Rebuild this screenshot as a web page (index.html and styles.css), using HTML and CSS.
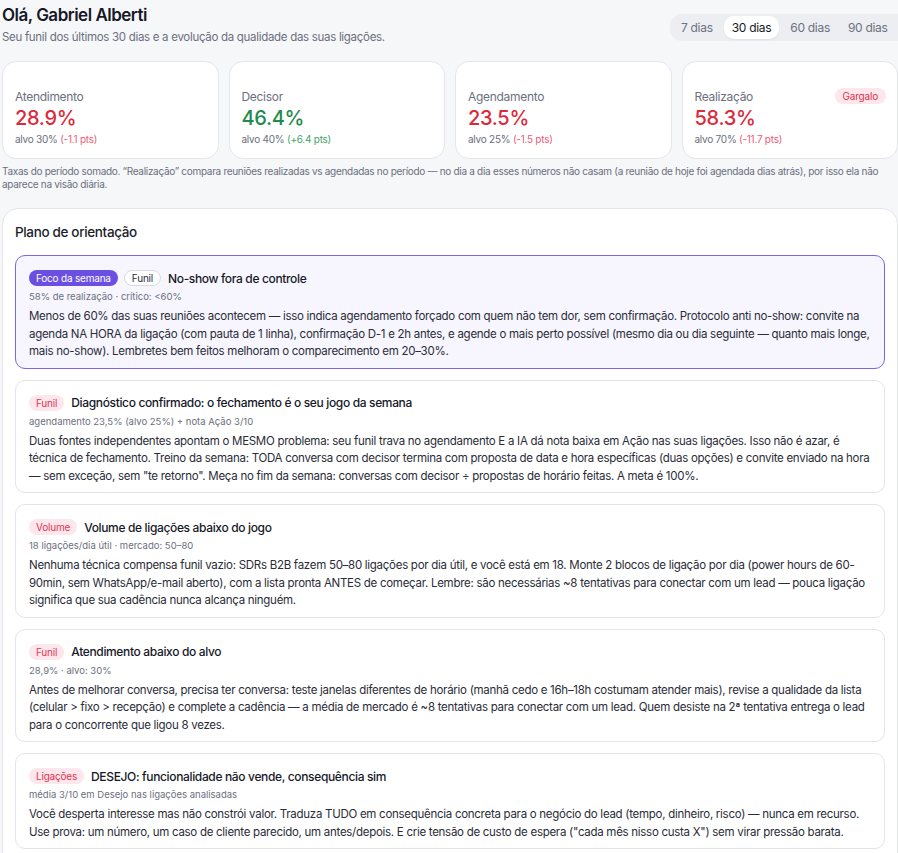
FILE: index.html
```html
<!DOCTYPE html>
<html lang="pt-BR">
<head>
<meta charset="utf-8">
<title>Funil</title>
<link rel="stylesheet" href="styles.css">
</head>
<body>
<div class="page">
  <header class="top">
    <div class="greet">
      <h1 class="hello">Olá, Gabriel Alberti</h1>
      <p class="sub">Seu funil dos últimos 30 dias e a evolução da qualidade das suas ligações.</p>
    </div>
    <nav class="tabs">
      <span class="tab">7 dias</span>
      <span class="tab active">30 dias</span>
      <span class="tab">60 dias</span>
      <span class="tab">90 dias</span>
    </nav>
  </header>

  <section class="kpis">
    <div class="kpi">
      <div class="kpi-head"><span class="kpi-label">Atendimento</span></div>
      <div class="kpi-value bad">28.9%</div>
      <div class="kpi-foot">alvo 30% <span class="bad-soft">(-1.1 pts)</span></div>
    </div>
    <div class="kpi">
      <div class="kpi-head"><span class="kpi-label">Decisor</span></div>
      <div class="kpi-value good">46.4%</div>
      <div class="kpi-foot">alvo 40% <span class="good-soft">(+6.4 pts)</span></div>
    </div>
    <div class="kpi">
      <div class="kpi-head"><span class="kpi-label">Agendamento</span></div>
      <div class="kpi-value bad">23.5%</div>
      <div class="kpi-foot">alvo 25% <span class="bad-soft">(-1.5 pts)</span></div>
    </div>
    <div class="kpi">
      <div class="kpi-head"><span class="kpi-label">Realização</span><span class="flag">Gargalo</span></div>
      <div class="kpi-value bad">58.3%</div>
      <div class="kpi-foot">alvo 70% <span class="bad-soft">(-11.7 pts)</span></div>
    </div>
  </section>

  <p class="note">Taxas do período somado. “Realização” compara reuniões realizadas vs agendadas no período — no dia a dia esses números não casam (a reunião de hoje foi agendada dias atrás), por isso ela não aparece na visão diária.</p>

  <section class="plan">
    <h2 class="plan-title">Plano de orientação</h2>

    <article class="tip focus">
      <div class="tip-head">
        <span class="pill pill-focus">Foco da semana</span>
        <span class="pill pill-outline">Funil</span>
        <span class="tip-title">No-show fora de controle</span>
      </div>
      <div class="tip-meta">58% de realização · crítico: &lt;60%</div>
      <p class="tip-body">Menos de 60% das suas reuniões acontecem — isso indica agendamento forçado com quem não tem dor, sem confirmação. Protocolo anti no-show: convite na agenda NA HORA da ligação (com pauta de 1 linha), confirmação D-1 e 2h antes, e agende o mais perto possível (mesmo dia ou dia seguinte — quanto mais longe, mais no-show). Lembretes bem feitos melhoram o comparecimento em 20–30%.</p>
    </article>

    <article class="tip">
      <div class="tip-head">
        <span class="pill pill-soft">Funil</span>
        <span class="tip-title">Diagnóstico confirmado: o fechamento é o seu jogo da semana</span>
      </div>
      <div class="tip-meta">agendamento 23,5% (alvo 25%) + nota Ação 3/10</div>
      <p class="tip-body">Duas fontes independentes apontam o MESMO problema: seu funil trava no agendamento E a IA dá nota baixa em Ação nas suas ligações. Isso não é azar, é técnica de fechamento. Treino da semana: TODA conversa com decisor termina com proposta de data e hora específicas (duas opções) e convite enviado na hora — sem exceção, sem "te retorno". Meça no fim da semana: conversas com decisor ÷ propostas de horário feitas. A meta é 100%.</p>
    </article>

    <article class="tip">
      <div class="tip-head">
        <span class="pill pill-soft">Volume</span>
        <span class="tip-title">Volume de ligações abaixo do jogo</span>
      </div>
      <div class="tip-meta">18 ligações/dia útil · mercado: 50–80</div>
      <p class="tip-body">Nenhuma técnica compensa funil vazio: SDRs B2B fazem 50–80 ligações por dia útil, e você está em 18. Monte 2 blocos de ligação por dia (power hours de 60-90min, sem WhatsApp/e-mail aberto), com a lista pronta ANTES de começar. Lembre: são necessárias ~8 tentativas para conectar com um lead — pouca ligação significa que sua cadência nunca alcança ninguém.</p>
    </article>

    <article class="tip">
      <div class="tip-head">
        <span class="pill pill-soft">Funil</span>
        <span class="tip-title">Atendimento abaixo do alvo</span>
      </div>
      <div class="tip-meta">28,9% · alvo: 30%</div>
      <p class="tip-body">Antes de melhorar conversa, precisa ter conversa: teste janelas diferentes de horário (manhã cedo e 16h–18h costumam atender mais), revise a qualidade da lista (celular &gt; fixo &gt; recepção) e complete a cadência — a média de mercado é ~8 tentativas para conectar com um lead. Quem desiste na 2ª tentativa entrega o lead para o concorrente que ligou 8 vezes.</p>
    </article>

    <article class="tip">
      <div class="tip-head">
        <span class="pill pill-soft">Ligações</span>
        <span class="tip-title">DESEJO: funcionalidade não vende, consequência sim</span>
      </div>
      <div class="tip-meta">média 3/10 em Desejo nas ligações analisadas</div>
      <p class="tip-body">Você desperta interesse mas não constrói valor. Traduza TUDO em consequência concreta para o negócio do lead (tempo, dinheiro, risco) — nunca em recurso. Use prova: um número, um caso de cliente parecido, um antes/depois. E crie tensão de custo de espera ("cada mês nisso custa X") sem virar pressão barata.</p>
    </article>
  </section>
</div>
</body>
</html>
```

FILE: styles.css
```css
* { box-sizing: border-box; }

html, body {
  margin: 0;
  padding: 0;
  background: #f6f7f9;
}

body {
  font-family: Inter, "Noto Sans", sans-serif;
  color: #1b1d2a;
  letter-spacing: -0.2px;
  overflow: hidden;
}

.page {
  width: 898px;
  padding: 4px 0 0 2px;
}

/* header */
.top {
  display: flex;
  justify-content: space-between;
  align-items: flex-start;
}

.hello {
  margin: 0;
  font-size: 17px;
  font-weight: 600;
  letter-spacing: -0.5px;
  line-height: 22px;
  color: #161827;
}

.sub {
  margin: 3px 0 0;
  font-size: 11.5px;
  line-height: 16px;
  color: #6b6f7e;
  letter-spacing: -0.3px;
}

.tabs {
  display: flex;
  align-items: center;
  gap: 0;
  margin-top: 10px;
  padding: 2px 0 2px 4px;
  height: 27px;
  background: #eceef2;
  border-radius: 12px 0 0 12px;
  width: 228px;
}

.tab {
  white-space: nowrap;
  padding: 4px 6px 4px 7px;
  margin-right: 5px;
  font-size: 12px;
  line-height: 15px;
  letter-spacing: -0.3px;
  color: #6d7180;
  border-radius: 10px;
}

.tab.active {
  background: #fff;
  color: #161827;
  padding: 4px 8px;
  margin-right: 4px;
  box-shadow: 0 1px 2px rgba(0,0,0,0.06);
}

/* kpi cards */
.kpis {
  display: grid;
  grid-template-columns: repeat(4, 1fr);
  gap: 10px;
  margin-top: 16px;
}

.kpi {
  background: #fff;
  border: 1px solid #e4e6eb;
  border-radius: 14px;
  padding: 26px 12px 12px;
  height: 98px;
}

.kpi-head {
  display: flex;
  justify-content: space-between;
  align-items: center;
  height: 16px;
}

.kpi-label {
  font-size: 12px;
  color: #6b6f7e;
  letter-spacing: -0.3px;
}

.flag {
  font-size: 10px;
  color: #d8344c;
  background: #fde7ec;
  border-radius: 8px;
  padding: 2px 8px;
  margin-right: -1px;
}

.kpi-value {
  margin-top: 2px;
  font-size: 20px;
  font-weight: 500;
  line-height: 24px;
  letter-spacing: -0.3px;
}

.kpi-foot {
  margin-top: 3px;
  font-size: 10px;
  color: #6b6f7e;
  letter-spacing: -0.25px;
}

.bad { color: #dc2a3b; }
.good { color: #1f8b4c; }
.bad-soft { color: #ec5b77; }
.good-soft { color: #3fa46a; }

/* note */
.note {
  margin: 6px 0 0;
  font-size: 10px;
  line-height: 12.5px;
  color: #6b6f7e;
  letter-spacing: -0.3px;
  padding-right: 16px;
}

/* orientation plan */
.plan {
  margin-top: 18px;
  background: #fff;
  border: 1px solid #e4e6eb;
  border-radius: 16px 16px 0 0;
  padding: 14px 12px 8px;
}

.plan-title {
  margin: 0 0 14px;
  font-size: 13.5px;
  font-weight: 500;
  line-height: 18px;
  letter-spacing: -0.35px;
  color: #1b1d2a;
}

.tip {
  border: 1px solid #e2e4e9;
  border-radius: 10px;
  padding: 14px 13px 7px;
  margin-bottom: 11px;
  background: #fff;
}

.tip.focus {
  border-color: #7966e8;
  background: #f7f6fe;
}

.tip-head {
  display: flex;
  align-items: center;
  gap: 6px;
}

.pill {
  font-size: 10px;
  line-height: 12px;
  padding: 2px 7px;
  border-radius: 9px;
  letter-spacing: -0.2px;
}

.pill-focus {
  background: #6b4fe0;
  color: #fff;
}

.pill-outline {
  border: 1px solid #d8dae0;
  background: #fff;
  color: #2a2c38;
  padding: 1px 7px;
}

.pill-soft {
  background: #fde7ec;
  color: #e03352;
}

.tip-title {
  margin-left: 1px;
  font-size: 12px;
  font-weight: 500;
  letter-spacing: -0.35px;
  color: #161827;
}

.tip-meta {
  margin-top: 5px;
  font-size: 9.5px;
  line-height: 12px;
  letter-spacing: 0;
  color: #6b6f7e;
}

.tip-body {
  margin: 5px 0 0;
  font-size: 11.5px;
  line-height: 17.5px;
  letter-spacing: -0.28px;
  color: #2a2c38;
}
```
